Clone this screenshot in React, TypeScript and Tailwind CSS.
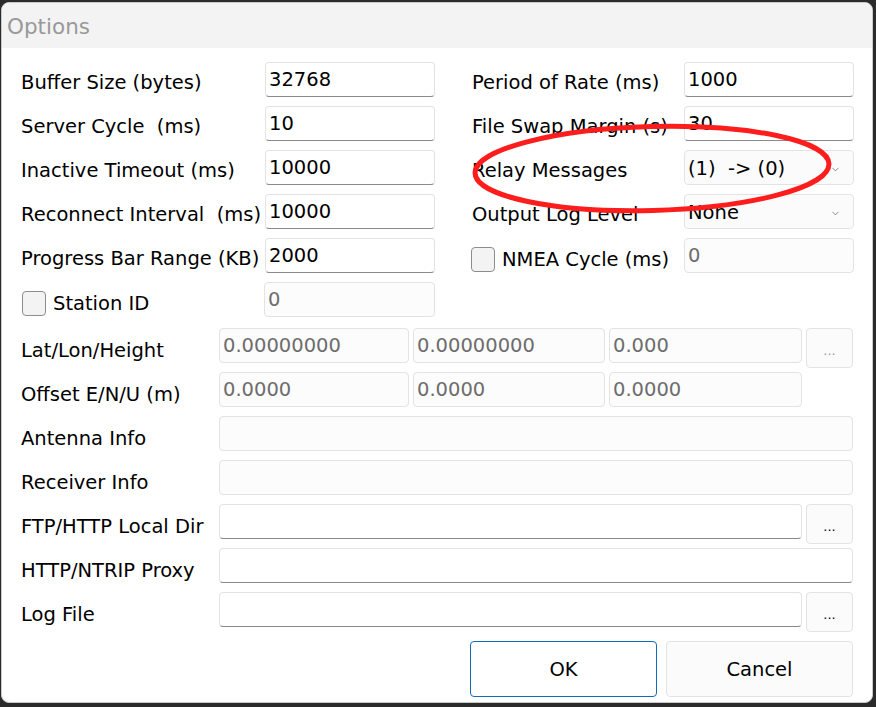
import React from 'react';
import { ChevronDown } from 'lucide-react';

const font = { fontFamily: '"DejaVu Sans", Verdana, sans-serif' };

const Field = ({ value = '', disabled = false, w = 'w-[170px]' }: { value?: string; disabled?: boolean; w?: string }) => (
  <div
    className={`${w} h-[35px] shrink-0 rounded-[4px] border flex items-center pl-[3px] pt-[1px] text-[19.5px] leading-none whitespace-pre ${
      disabled
        ? 'border-[#e3e3e3] bg-[#fcfcfc] text-[#6d6d6d]'
        : 'border-[#e3e3e3] border-b-[#8a8a8a] bg-white text-black'
    }`}
  >
    {value}
  </div>
);

const Select = ({ value }: { value: string }) => (
  <div className="w-[170px] h-[35px] shrink-0 rounded-[4px] border border-[#e3e3e3] bg-[#fbfbfb] flex items-center justify-between pl-[3px] pr-[12px] pt-[2px] text-[19.5px] leading-none text-black whitespace-pre">
    <span>{value}</span>
    <ChevronDown className="w-[11px] h-[11px] text-[#5a5a5a] mt-[2px]" strokeWidth={1.5} />
  </div>
);

const Check = () => (
  <div className="w-[24px] h-[25px] shrink-0 rounded-[4px] border border-[#8c8c8c] bg-[#f3f3f3]" />
);

const DotsButton = ({ disabled = false }: { disabled?: boolean }) => (
  <div
    className={`w-[47px] h-[40px] shrink-0 self-start rounded-[4px] border border-[#e3e3e3] bg-[#fbfbfb] flex items-center justify-center pt-[6px] text-[13px] ${
      disabled ? 'text-[#9a9a9a]' : 'text-black'
    }`}
  >
    ...
  </div>
);

const Row = ({ label, labelW, shift = 'pt-[7px]', children }: { label: React.ReactNode; labelW: string; shift?: string; children: React.ReactNode }) => (
  <div className="flex h-[35px] items-start">
    <div className={`${labelW} ${shift} shrink-0 h-[35px] flex items-center text-[19.5px] whitespace-pre`}>{label}</div>
    {children}
  </div>
);

export default function App() {
  const b = 'pt-[10px]';
  return (
    <div className="relative w-[876px] h-[707px] bg-[#2b2b2b] overflow-hidden" style={font}>
      <div className="ml-[1px] mt-[2px] w-[872px] h-[701px] rounded-[8px] border border-[#c9c9c9] bg-white overflow-hidden flex flex-col">
        <div className="h-[45px] bg-[#f3f3f3] flex items-center pl-[5px] pt-[3px] text-[21.5px] text-[#999999] shrink-0">Options</div>

        <div className="pl-[19px] pr-[19px] pt-[14px] flex flex-col text-black">
          <div className="flex gap-[37px]">
            <div className="flex flex-col gap-[9px] w-[414px]">
              <Row label="Buffer Size (bytes)" labelW="w-[244px]"><Field value="32768" /></Row>
              <Row label="Server Cycle  (ms)" labelW="w-[244px]"><Field value="10" /></Row>
              <Row label="Inactive Timeout (ms)" labelW="w-[244px]"><Field value="10000" /></Row>
              <Row label="Reconnect Interval  (ms)" labelW="w-[244px]"><Field value="10000" /></Row>
              <Row label="Progress Bar Range (KB)" labelW="w-[244px]"><Field value="2000" /></Row>
              <Row
                label={
                  <span className="flex items-center gap-[7px] pl-[1px]">
                    <Check />
                    <span>Station ID</span>
                  </span>
                }
                labelW="w-[243px]"
                shift="pt-[8px]"
              >
                <Field value="0" disabled w="w-[171px]" />
              </Row>
            </div>
            <div className="flex flex-col gap-[9px] w-[382px]">
              <Row label="Period of Rate (ms)" labelW="w-[212px]"><Field value="1000" /></Row>
              <Row label="File Swap Margin (s)" labelW="w-[212px]"><Field value="30" /></Row>
              <Row label="Relay Messages" labelW="w-[212px]"><Select value="(1)  -> (0)" /></Row>
              <Row label="Output Log Level" labelW="w-[212px]"><Select value="None" /></Row>
              <Row
                label={
                  <span className="flex items-center gap-[7px] -ml-[1px]">
                    <Check />
                    <span>NMEA Cycle (ms)</span>
                  </span>
                }
                labelW="w-[212px]"
                shift="pt-[8px]"
              >
                <Field value="0" disabled />
              </Row>
            </div>
          </div>

          <div className="flex flex-col gap-[9px] mt-[11px]">
            <Row label="Lat/Lon/Height" labelW="w-[198px]" shift={b}>
              <div className="flex gap-[4px]">
                <Field value="0.00000000" disabled w="w-[190px]" />
                <Field value="0.00000000" disabled w="w-[192px]" />
                <Field value="0.000" disabled w="w-[193px]" />
                <DotsButton disabled />
              </div>
            </Row>
            <Row label="Offset E/N/U (m)" labelW="w-[198px]" shift={b}>
              <div className="flex gap-[4px]">
                <Field value="0.0000" disabled w="w-[190px]" />
                <Field value="0.0000" disabled w="w-[192px]" />
                <Field value="0.0000" disabled w="w-[193px]" />
              </div>
            </Row>
            <Row label="Antenna Info" labelW="w-[198px]" shift={b}><Field disabled w="w-[634px]" /></Row>
            <Row label="Receiver Info" labelW="w-[198px]" shift={b}><Field disabled w="w-[634px]" /></Row>
            <Row label="FTP/HTTP Local Dir" labelW="w-[198px]" shift={b}>
              <div className="flex gap-[4px]">
                <Field w="w-[583px]" />
                <DotsButton />
              </div>
            </Row>
            <Row label="HTTP/NTRIP Proxy" labelW="w-[198px]" shift={b}><Field w="w-[634px]" /></Row>
            <Row label="Log File" labelW="w-[198px]" shift={b}>
              <div className="flex gap-[4px]">
                <Field w="w-[583px]" />
                <DotsButton />
              </div>
            </Row>
          </div>

          <div className="flex justify-end gap-[9px] mt-[14px]">
            <div className="w-[187px] h-[56px] rounded-[4px] border border-[#0f6cbd] bg-white flex items-center justify-center pt-[2px] text-[19.5px]">OK</div>
            <div className="w-[187px] h-[56px] rounded-[4px] border border-[#e3e3e3] bg-[#fbfbfb] flex items-center justify-center pt-[2px] text-[19.5px]">Cancel</div>
          </div>
        </div>
      </div>

      <svg className="absolute inset-0 pointer-events-none" width="876" height="707">
        <ellipse cx="652" cy="168.5" rx="177" ry="42" fill="none" stroke="#fd1d1d" strokeWidth="5" transform="rotate(-1.5 652 168.5)" />
      </svg>
    </div>
  );
}
